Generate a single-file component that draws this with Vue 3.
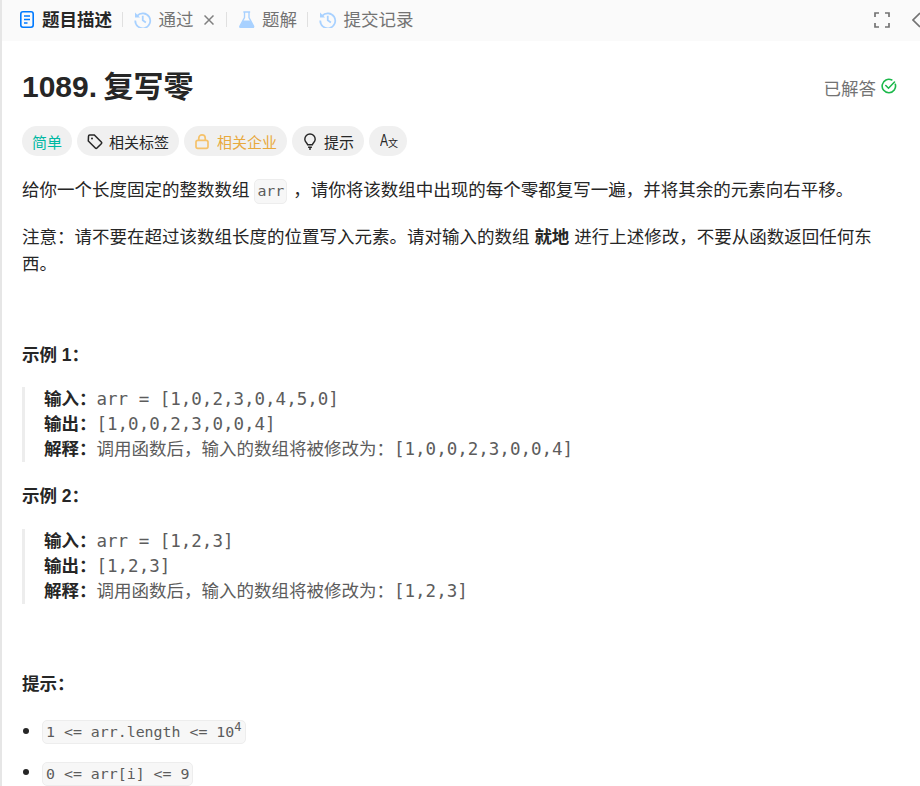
<template>
  <div class="panel">
    <div class="tabbar">
      <div class="tabs">
        <div class="tab active">
          <svg class="ic doc" viewBox="0 0 14 17" fill="none"><rect x="0.8" y="0.8" width="12.400" height="15.400" rx="2.200" stroke="#007aff" stroke-width="1.600"/><path d="M4 5h6M4 8.500h6M4 12h3.500" stroke="#007aff" stroke-width="1.400"/></svg>
          <span>题目描述</span>
        </div>
        <i class="sep"></i>
        <div class="tab">
          <svg class="ic" viewBox="0 0 18 18" fill="none"><path d="M3.200 5A7.700 7.700 0 1 1 1.300 9.800" stroke="#a8d1ff" stroke-width="1.800"/><path d="M1 1.500v5.200h5.200z" fill="#a8d1ff"/><path d="M9 4.800v4.800l3.200 2.200" stroke="#a8d1ff" stroke-width="1.800"/></svg>
          <span>通过</span>
          <svg class="close" viewBox="0 0 10 10" fill="none"><path d="M0.500 0.500l9 9M9.500 0.500l-9 9" stroke="#808080" stroke-width="1.500"/></svg>
        </div>
        <i class="sep"></i>
        <div class="tab">
          <svg class="ic" viewBox="0 0 17 18" fill="none"><path d="M5 1h7M6.200 1.500v5.300L1.500 15.400a1.400 1.400 0 0 0 1.200 2h11.600a1.400 1.400 0 0 0 1.200-2L10.800 6.800V1.500" stroke="#a8d1ff" stroke-width="1.400"/><path d="M4.800 9.800h7.400l3.300 6a1 1 0 0 1-1 1.600H2.500a1 1 0 0 1-1-1.600z" fill="#a8d1ff"/></svg>
          <span>题解</span>
        </div>
        <i class="sep"></i>
        <div class="tab">
          <svg class="ic" viewBox="0 0 18 18" fill="none"><path d="M3.200 5A7.700 7.700 0 1 1 1.300 9.800" stroke="#a8d1ff" stroke-width="1.800"/><path d="M1 1.500v5.200h5.200z" fill="#a8d1ff"/><path d="M9 4.800v4.800l3.200 2.200" stroke="#a8d1ff" stroke-width="1.800"/></svg>
          <span>提交记录</span>
        </div>
      </div>
      <div class="bar-right">
        <svg class="full" viewBox="0 0 16 16" fill="none"><path d="M1 5V1h4M11 1h4v4M15 11v4h-4M5 15H1v-4" stroke="#737373" stroke-width="1.700"/></svg>
        <svg class="chev" viewBox="0 0 8 16" fill="none"><path d="M8 1L1 8l7 7" stroke="#737373" stroke-width="1.700"/></svg>
      </div>
    </div>

    <div class="content">
      <div class="title-row">
        <h1>1089. 复写零</h1>
        <div class="solved">
          <span>已解答</span>
          <svg viewBox="0 0 16 16" fill="none"><path d="M14.300 6.200A6.700 6.700 0 1 1 10.800 2" stroke="#1cb84b" stroke-width="1.600" stroke-linecap="round"/><path d="M4.800 7.500l2.700 2.700 6-6.200" stroke="#1cb84b" stroke-width="1.600" stroke-linecap="round"/></svg>
        </div>
      </div>

      <div class="chips">
        <div class="chip easy">简单</div>
        <div class="chip">
          <svg class="chip-ic" viewBox="0 0 16 16" fill="none"><path d="M1.500 2.700c0-.7.500-1.200 1.200-1.200h4.600l7 7c.5.500.5 1.200 0 1.700l-4.300 4.300c-.5.500-1.200.5-1.700 0l-7-7z" stroke="#262626" stroke-width="1.500"/><circle cx="5" cy="5" r="1" fill="#262626"/></svg>
          相关标签
        </div>
        <div class="chip company">
          <svg class="chip-ic" viewBox="0 0 16 16" fill="none"><rect x="2" y="6.800" width="12" height="8" rx="1.800" stroke="#f5c26b" stroke-width="1.700"/><path d="M4.800 6.800V4.500a3.200 3.200 0 0 1 6.400 0v2.300" stroke="#f5c26b" stroke-width="1.700"/></svg>
          相关企业
        </div>
        <div class="chip">
          <svg class="chip-ic" viewBox="0 0 16 18" fill="none"><path d="M5.500 12.500C5 10.500 2.500 9.500 2.500 6.500a5.500 5.500 0 0 1 11 0c0 3-2.500 4-3 6z" stroke="#262626" stroke-width="1.500"/><path d="M6 15h4M7 17h2" stroke="#262626" stroke-width="1.600"/></svg>
          提示
        </div>
        <div class="chip lang"><span class="a">A</span><span class="wen">文</span></div>
      </div>

      <p class="first">给你一个长度固定的整数数组 <code class="arr">arr</code>&nbsp;，请你将该数组中出现的每个零都复写一遍，并将其余的元素向右平移。</p>
      <p class="note">注意：请不要在超过该数组长度的位置写入元素。请对输入的数组 <b>就地</b> 进行上述修改，不要从函数返回任何东西。</p>

      <div v-for="(ex, i) in examples" :key="i" class="example">
        <p class="ex-title"><b>示例 {{ i + 1 }}：</b></p>
        <div class="block">
          <div class="line"><b>输入：</b>{{ ex.input }}</div>
          <div class="line"><b>输出：</b>{{ ex.output }}</div>
          <div class="line"><b>解释：</b>调用函数后，输入的数组将被修改为：{{ ex.output }}</div>
        </div>
      </div>

      <p class="hint-title"><b>提示：</b></p>
      <ul>
        <li><code>1 &lt;= arr.length &lt;= 10<sup>4</sup></code></li>
        <li><code>0 &lt;= arr[i] &lt;= 9</code></li>
      </ul>
    </div>
  </div>
</template>

<script setup>
const examples = [
  { input: 'arr = [1,0,2,3,0,4,5,0]', output: '[1,0,0,2,3,0,0,4]' },
  { input: 'arr = [1,2,3]', output: '[1,2,3]' }
];
</script>

<style>
html, body { margin: 0; background: #fff; overflow: hidden; }
</style>

<style scoped>
.panel {
  width: 920px;
  height: 786px;
  box-sizing: border-box;
  overflow: hidden;
  border-left: 2px solid #e6e6e6;
  font-family: "Liberation Sans", "Noto Sans CJK SC", sans-serif;
  font-size: 17.5px;
  color: #262626;
  background: #fff;
}
.tabbar {
  height: 41px;
  box-sizing: border-box;
  background: #fafafa;
  display: flex;
  align-items: center;
  justify-content: space-between;
  padding: 0 0 2px 18px;
}
.tabs { display: flex; align-items: center; }
.tab {
  display: flex;
  align-items: center;
  gap: 7px;
  color: #737373;
  line-height: 20px;
}
.tab.active { color: #262626; font-weight: 700; gap: 8px; }
.ic { width: 17.500px; height: 17.500px; }
.ic.doc { width: 14px; height: 17px; }
.close { width: 10px; height: 10px; margin: 0 2px 0 3px; }
.sep {
  width: 1px;
  height: 15px;
  background: #e0e0e0;
  margin: 0 11px 0 10px;
}
.bar-right { display: flex; align-items: center; gap: 22px; }
.full { width: 16px; height: 16px; }
.chev { width: 8px; height: 16px; }
.content { padding: 0 20px; }
.title-row {
  display: flex;
  align-items: center;
  justify-content: space-between;
  height: 72px;
  padding-top: 20px;
  box-sizing: border-box;
}
h1 {
  margin: 0;
  font-size: 30px;
  font-weight: 700;
  line-height: 38px;
  word-spacing: -2px;
}
.solved {
  display: flex;
  align-items: center;
  gap: 5px;
  color: #737373;
  margin-right: 3px;
}
.solved svg { width: 16px; height: 16px; margin-top: -3px; }
.chips { display: flex; gap: 5px; margin-top: 13px; height: 30px; }
.chip {
  display: flex;
  align-items: center;
  gap: 6px;
  height: 30px;
  padding: 0 10px;
  border-radius: 15px;
  background: #f0f0f0;
  font-size: 15px;
  color: #262626;
}
.chip-ic { width: 16px; height: 17px; }
.easy { color: #00b8a3; }
.company { color: #e8a93d; gap: 7px; }
.lang { gap: 0; padding: 0 9px 0 11px; }
.a {
  display: inline-block;
  width: 8px;
  font-size: 16px;
  transform: scaleX(0.75);
  transform-origin: left center;
}
.wen { font-size: 10px; margin-top: 2px; }
p { margin: 0; line-height: 27px; }
.first { margin-top: 21px; }
.note { margin-top: 20px; }
.ex-title { margin-top: 64px; }
.example + .example .ex-title { margin-top: 21px; }
.block {
  margin-top: 18px;
  padding-left: 19px;
  border-left: 3px solid #ededed;
  font-family: "DejaVu Sans Mono", "Noto Sans CJK SC", monospace;
  color: #5c5c5c;
}
.example + .example .block { margin-top: 19px; }
.line { height: 25px; line-height: 25px; white-space: pre-wrap; }
.line b {
  font-family: "Liberation Sans", "Noto Sans CJK SC", sans-serif;
  color: #262626;
  font-weight: 700;
}
code {
  display: inline-block;
  box-sizing: border-box;
  font-family: "DejaVu Sans Mono", monospace;
  font-size: 14.900px;
  line-height: 22px;
  padding: 0 3px;
  background: #f7f7f7;
  border: 1px solid #ededed;
  border-radius: 5px;
  color: #5c5c5c;
  vertical-align: middle;
}
.arr { padding: 0 2px; margin-right: 1px; line-height: 23px; }
sup { font-size: 12px; line-height: 0; }
.hint-title { margin-top: 67px; }
ul { margin: 20px 0 0; padding: 0 0 0 20px; }
li { line-height: 24px; margin-bottom: 15px; }
li::marker { color: #262626; font-size: 20px; }
</style>
